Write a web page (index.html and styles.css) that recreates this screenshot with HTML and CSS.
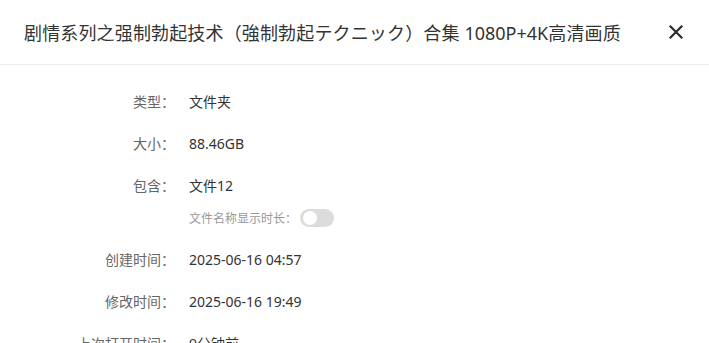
FILE: index.html
```html
<!DOCTYPE html>
<html lang="zh-CN">
<head>
<meta charset="utf-8">
<title>属性</title>
<link rel="stylesheet" href="styles.css">
</head>
<body>
<div class="dialog">
  <header class="header">
    <h1 class="title">剧情系列之强制勃起技术（強制勃起テクニック）合集 <span class="latin">1080P+4K</span>高清画质</h1>
    <button class="close" aria-label="关闭">
      <svg width="14" height="14" viewBox="0 0 14 14"><path d="M1.5 1.5 L12.5 12.5 M12.5 1.5 L1.5 12.5" stroke="#2b2b2b" stroke-width="2.2" stroke-linecap="square" fill="none"/></svg>
    </button>
  </header>
  <div class="body">
    <div class="row"><span class="label">类型：</span><span class="value">文件夹</span></div>
    <div class="row"><span class="label">大小：</span><span class="value">88.46GB</span></div>
    <div class="row"><span class="label">包含：</span><span class="value">文件12</span></div>
    <div class="subrow">
      <span class="sublabel">文件名称显示时长：</span>
      <span class="toggle"><span class="knob"></span></span>
    </div>
    <div class="row"><span class="label">创建时间：</span><span class="value">2025-06-16 04:57</span></div>
    <div class="row"><span class="label">修改时间：</span><span class="value">2025-06-16 19:49</span></div>
    <div class="row"><span class="label">上次打开时间：</span><span class="value">9分钟前</span></div>
  </div>
</div>
</body>
</html>
```

FILE: styles.css
```css
html, body {
  margin: 0;
  padding: 0;
  background: #fff;
  overflow: hidden;
}
body {
  font-family: "Noto Sans", "Noto Sans CJK SC", sans-serif;
  color: #333;
}
.dialog {
  width: 709px;
  height: 343px;
}
.header {
  display: flex;
  align-items: center;
  justify-content: space-between;
  height: 64px;
  padding: 0 24px 0 24px;
  border-bottom: 1px solid #eeeeee;
  box-sizing: content-box;
  width: 661px;
}
.title {
  margin: 0;
  font-size: 18px;
  font-weight: normal;
  color: #333;
  white-space: nowrap;
  letter-spacing: 0.15px;
}
.latin {
  letter-spacing: 0;
}
.close {
  border: none;
  background: none;
  padding: 0;
  margin-right: 2px;
  width: 14px;
  height: 14px;
  display: flex;
  cursor: pointer;
}
.body {
  padding-top: 15px;
}
.row {
  display: flex;
  align-items: center;
  height: 42px;
  font-size: 14px;
}
.label {
  width: 175px;
  text-align: right;
  color: #666;
  white-space: nowrap;
}
.value {
  margin-left: 14px;
  color: #333;
}
.subrow {
  display: flex;
  align-items: center;
  height: 24px;
  margin-bottom: 8px;
  padding-left: 189px;
  font-size: 12px;
  color: #999;
}
.toggle {
  position: relative;
  width: 34px;
  height: 18px;
  border-radius: 9px;
  background: #dcdcdc;
  margin-left: 3px;
}
.knob {
  position: absolute;
  left: 3px;
  top: 2px;
  width: 14px;
  height: 14px;
  border-radius: 50%;
  background: #fff;
}
```
